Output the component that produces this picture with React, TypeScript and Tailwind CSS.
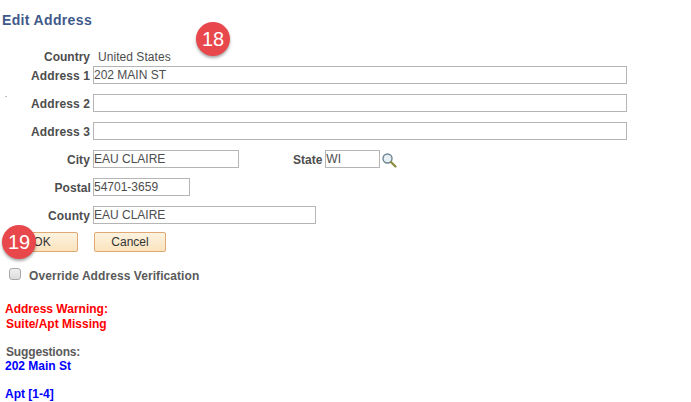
const font = { fontFamily: '"Liberation Sans", Arial, sans-serif' };

function Row({ label, value, inputW, className = "", labelClass = "" }: { label: string; value: string; inputW: string; className?: string; labelClass?: string }) {
  return (
    <div className={`flex items-center h-[18px] ${className}`}>
      <label className={`w-[90px] h-[18px] text-right text-[12px] font-bold text-[#4d4d4d] leading-[20px] tracking-[0.1px] ${labelClass}`}>{label}</label>
      <div className={`ml-[3px] h-[18px] ${inputW} border border-[#b5b5b5] bg-white pt-[1px] text-[12px] leading-[14px] text-[#4d4d4d] whitespace-nowrap`}>{value}</div>
    </div>
  );
}

function Badge({ n, className }: { n: string; className: string }) {
  return (
    <div className={`absolute w-[34px] h-[34px] rounded-full bg-[#e8474c] text-white text-[20px] flex items-center justify-center shadow-[0_2px_3px_rgba(0,0,0,0.35)] ${className}`}>{n}</div>
  );
}

export default function App() {
  return (
    <div className="relative w-[691px] h-[402px] overflow-hidden bg-white" style={font}>
      <h1 className="pl-[2px] pt-[12px] text-[14px] leading-[16px] font-bold text-[#3f5a8a] tracking-[0.35px]">Edit Address</h1>
      <div className="flex items-center h-[14px] mt-[22px]">
        <span className="w-[90px] text-right text-[12px] font-bold text-[#4d4d4d]">Country</span>
        <span className="ml-[8px] text-[12px] text-[#4d4d4d] tracking-[0.05px]">United States</span>
      </div>
      <Row className="mt-[2px]" label="Address 1" value="202 MAIN ST" inputW="w-[534px]" />
      <Row className="mt-[10px]" label="Address 2" value="" inputW="w-[534px]" />
      <Row className="mt-[10px]" label="Address 3" value="" inputW="w-[534px]" />
      <div className="flex items-center h-[18px] mt-[10px]">
        <Row label="City" value="EAU CLAIRE" inputW="w-[146px]" />
        <span className="ml-[54px] h-[18px] leading-[20px] text-[12px] font-bold text-[#4d4d4d]">State</span>
        <div className="ml-[3px] h-[18px] w-[55px] border border-[#b5b5b5] pt-[1px] text-[12px] leading-[14px] text-[#4d4d4d]">WI</div>
        <svg className="ml-[1px] mt-[2px]" width="16" height="16" viewBox="0 0 16 16">
          <circle cx="6.5" cy="6.5" r="4.5" fill="#e6f0f5" stroke="#6d8591" strokeWidth="1.4" />
          <path d="M10 10l4.5 4.5" stroke="#8a8a3c" strokeWidth="2.2" strokeLinecap="round" />
        </svg>
      </div>
      <Row className="mt-[10px]" labelClass="pl-[1px] w-[91px] -mr-[1px]" label="Postal" value="54701-3659" inputW="w-[97px]" />
      <Row className="mt-[10px]" label="County" value="EAU CLAIRE" inputW="w-[223px]" />
      <div className="flex mt-[8px] pl-[6px] gap-[16px]">
        <button className="w-[72px] h-[20px] rounded-[2px] border border-[#e0a872] bg-gradient-to-b from-[#fdf3e0] to-[#fbe3bd] text-[12px] leading-[18px] text-[#333]">OK</button>
        <button className="w-[72px] h-[20px] rounded-[2px] border border-[#e0a872] bg-gradient-to-b from-[#fdf3e0] to-[#fbe3bd] text-[12px] leading-[18px] text-[#333]">Cancel</button>
      </div>
      <div className="flex items-center mt-[17px] pl-[9px] h-[14px]">
        <span className="w-[12px] h-[12px] -mt-[4px] rounded-[3px] border border-[#a8a8a8] bg-gradient-to-b from-[#f0f0f0] to-[#dcdcdc]" />
        <span className="ml-[8px] text-[12px] font-bold text-[#5a5a5a] tracking-[0.07px]">Override Address Verification</span>
      </div>
      <div className="mt-[19px] pl-[5px] text-[12px] font-bold leading-[15px] text-[#ff0000]">
        <p>Address Warning:</p>
        <p className="pl-[1px]">Suite/Apt Missing</p>
      </div>
      <div className="mt-[13px] pl-[5px] text-[12px] font-bold leading-[14px]">
        <p className="pl-[1px] text-[#5a5a5a] tracking-[-0.15px]">Suggestions:</p>
        <p className="text-[#0000ff]">202 Main St</p>
        <p className="mt-[14px] text-[#0000ff]">Apt [1-4]</p>
      </div>
      <div className="absolute left-[5px] top-[96px] w-[2px] h-[1px] bg-[#bbb]" />
      <Badge n="18" className="left-[196px] top-[22px]" />
      <Badge n="19" className="left-[2px] top-[225px]" />
    </div>
  );
}
